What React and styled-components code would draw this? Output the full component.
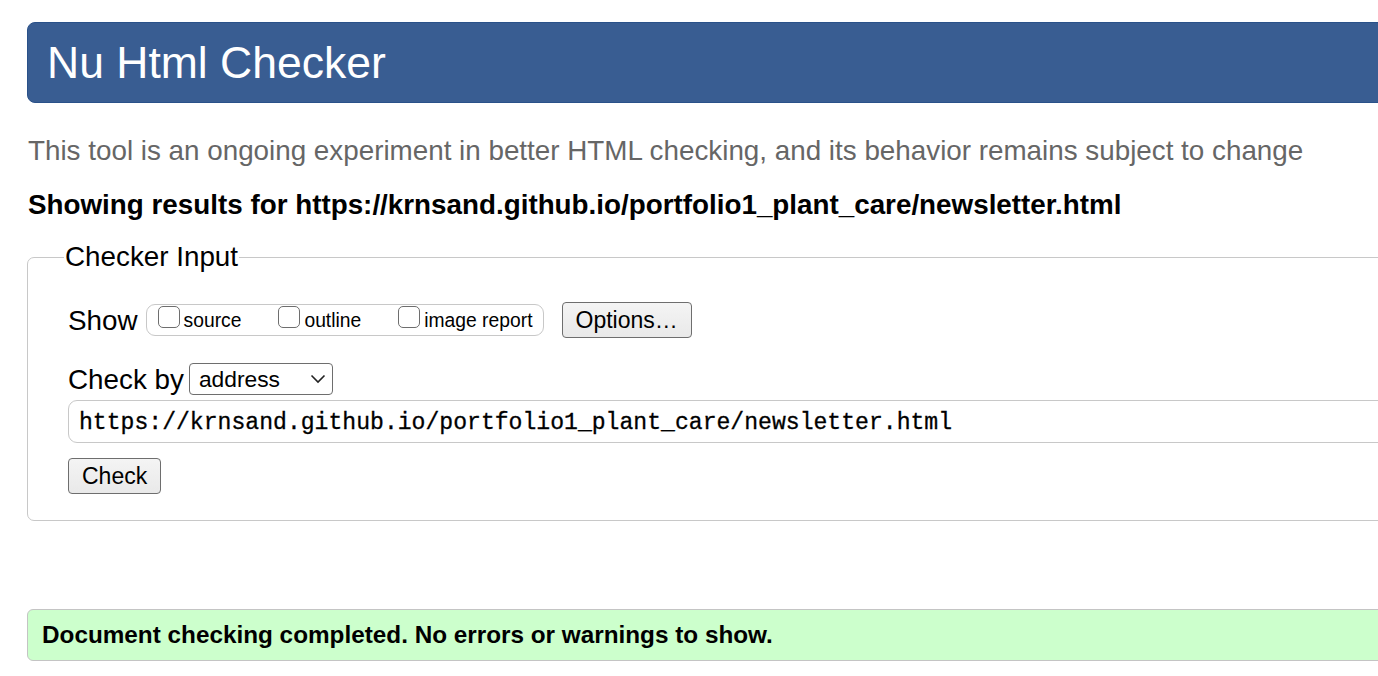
import React from "react";
import styled, { createGlobalStyle } from "styled-components";

const Global = createGlobalStyle`
  html, body { margin: 0; padding: 0; overflow: hidden; background: #fff; }
  body { font-family: "Liberation Sans", Arial, sans-serif; color: #000; }
`;

const Page = styled.div`
  width: 1440px;
  padding: 22px 0 0 27px;
  box-sizing: border-box;
`;

const Header = styled.h1`
  margin: 0;
  height: 81px;
  box-sizing: border-box;
  background: #395d92;
  border: 1px solid #2a5189;
  border-radius: 8px;
  color: #fff;
  font-weight: normal;
  font-size: 44.5px;
  line-height: 79px;
  padding-left: 19px;
`;

const Tagline = styled.p`
  margin: 33px 0 0 1px;
  color: #666;
  font-size: 27.8px;
  line-height: 30px;
`;

const ResultsFor = styled.p`
  margin: 24px 0 0 1px;
  font-weight: bold;
  font-size: 27.8px;
  line-height: 30px;
`;

const Fieldset = styled.fieldset`
  margin: 22px 0 0 0;
  padding: 8px 0 26px 40px;
  border: 1px solid #c8c8c8;
  border-radius: 7px;
  min-width: 0;
`;

const Legend = styled.legend`
  font-size: 27.8px;
  line-height: 30px;
  padding: 0 1px;
  margin-left: -4px;
`;

const Row = styled.div`
  display: flex;
  align-items: center;
  gap: ${(p) => p.$gap || 8}px;
  margin-top: ${(p) => p.$mt || 0}px;
`;

const RowLabel = styled.span`
  font-size: 27.8px;
  line-height: 31px;
`;

const CheckGroup = styled.div`
  display: flex;
  align-items: center;
  height: 32px;
  box-sizing: border-box;
  border: 1px solid #c8c8c8;
  border-radius: 9px;
  padding: 0 10px 0 11px;
  gap: 37px;
`;

const CheckItem = styled.label`
  display: flex;
  align-items: center;
  font-size: 19.3px;
  gap: 4px;
  padding-top: 2px;
`;

const Box = styled.input`
  appearance: none;
  margin: -8px 0 0 0;
  width: 22px;
  height: 22px;
  box-sizing: border-box;
  border: 1.5px solid #6e6e6e;
  border-radius: 5px;
  background: #fff;
`;

const Button = styled.button`
  font-family: "Liberation Sans", Arial, sans-serif;
  font-size: 23px;
  height: 36px;
  padding: 0 ${(p) => p.$px || 13}px;
  margin-left: ${(p) => p.$ml || 0}px;
  border: 1px solid #6e6e6e;
  border-radius: 4px;
  background: linear-gradient(#f4f4f4, #e9e9e9);
  color: #000;
  line-height: 1;
`;

const SelectWrap = styled.div`
  position: relative;
  display: inline-flex;
`;

const Select = styled.select`
  appearance: none;
  width: 144px;
  height: 32px;
  box-sizing: border-box;
  border: 1px solid #6e6e6e;
  border-radius: 4px;
  background: #fff;
  font-family: "Liberation Sans", Arial, sans-serif;
  font-size: 22.8px;
  padding: 0 0 0 9px;
  color: #000;
`;

const Chevron = styled.svg`
  position: absolute;
  right: 7px;
  top: 11px;
  pointer-events: none;
`;

const UrlInput = styled.input`
  display: block;
  margin-top: 5px;
  width: 1400px;
  height: 43px;
  box-sizing: border-box;
  border: 1px solid #c8c8c8;
  border-radius: 9px;
  padding: 3px 0 0 10px;
  font-family: "Liberation Mono", "DejaVu Sans Mono", monospace;
  font-size: 23.1px;
  color: #000;
  -webkit-text-stroke: 0.3px #000;
`;

const CheckRow = styled.div`
  margin-top: 15px;
`;

const Success = styled.div`
  margin-top: 88px;
  height: 52px;
  box-sizing: border-box;
  background: #ccffcc;
  border: 1px solid #c4c4c4;
  border-radius: 6px;
  padding-left: 14px;
  display: flex;
  align-items: center;
  font-weight: bold;
  font-size: 24.3px;
`;

const url = "https://krnsand.github.io/portfolio1_plant_care/newsletter.html";

export default function App() {
  return (
    <>
      <Global />
      <Page>
        <Header>Nu Html Checker</Header>
        <Tagline>
          This tool is an ongoing experiment in better HTML checking, and its behavior remains subject to change
        </Tagline>
        <ResultsFor>Showing results for {url}</ResultsFor>
        <Fieldset>
          <Legend>Checker Input</Legend>
          <Row $gap={8} $mt={22}>
            <RowLabel>Show</RowLabel>
            <CheckGroup>
              <CheckItem><Box type="checkbox" />source</CheckItem>
              <CheckItem><Box type="checkbox" />outline</CheckItem>
              <CheckItem><Box type="checkbox" />image report</CheckItem>
            </CheckGroup>
            <Button type="button" $ml={10}>Options…</Button>
          </Row>
          <Row $gap={5} $mt={25}>
            <RowLabel>Check by</RowLabel>
            <SelectWrap>
              <Select defaultValue="address">
                <option value="address">address</option>
                <option value="file">file upload</option>
                <option value="text">text input</option>
              </Select>
              <Chevron width="16" height="10" viewBox="0 0 16 10">
                <path d="M1.5 1.5 L8 8 L14.5 1.5" fill="none" stroke="#222" strokeWidth="1.6" />
              </Chevron>
            </SelectWrap>
          </Row>
          <UrlInput type="text" defaultValue={url} />
          <CheckRow>
            <Button type="button" $px={13}>Check</Button>
          </CheckRow>
        </Fieldset>
        <Success>Document checking completed. No errors or warnings to show.</Success>
      </Page>
    </>
  );
}
